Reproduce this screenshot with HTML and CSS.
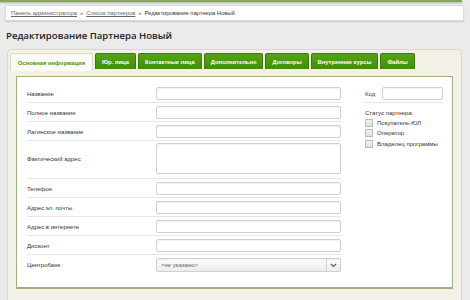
FILE: index.html
```html
<!DOCTYPE html>
<html lang="ru">
<head>
<meta charset="utf-8">
<link rel="stylesheet" href="styles.css">
</head>
<body>
<div class="topbar"></div>
<div class="crumbs">
  <a href="#">Панель администратора</a><span class="sep">»</span><a href="#">Список партнеров</a><span class="sep">»</span><span class="cur">Редактирование партнера Новый</span>
</div>
<h1 class="title">Редактирование Партнера Новый</h1>
<div class="panel">
  <div class="tabs">
    <div class="tab active">Основная информация</div>
    <div class="tab">Юр. лица</div>
    <div class="tab">Контактные лица</div>
    <div class="tab">Дополнительно</div>
    <div class="tab">Договоры</div>
    <div class="tab">Внутренние курсы</div>
    <div class="tab">Файлы</div>
  </div>
  <div class="box">
    <div class="main">
      <div class="row"><span class="lbl">Название</span><span class="inp"></span></div>
      <div class="row"><span class="lbl">Полное название</span><span class="inp"></span></div>
      <div class="row"><span class="lbl">Латинское название</span><span class="inp"></span></div>
      <div class="row tall"><span class="lbl">Фактический адрес</span><span class="inp area"></span></div>
      <div class="row"><span class="lbl">Телефон</span><span class="inp"></span></div>
      <div class="row"><span class="lbl">Адрес эл. почты</span><span class="inp"></span></div>
      <div class="row"><span class="lbl">Адрес в интернете</span><span class="inp"></span></div>
      <div class="row"><span class="lbl">Дисконт</span><span class="inp"></span></div>
      <div class="row last"><span class="lbl">Центробанк</span><span class="inp select"><span class="val">&lt;не указано&gt;</span><span class="arrow"><svg width="7" height="5" viewBox="0 0 7 5"><path d="M1 1 L3.5 3.5 L6 1" fill="none" stroke="#555" stroke-width="1.1"/></svg></span></span></div>
    </div>
    <div class="side">
      <div class="coderow"><span class="lbl">Код</span><span class="inp code"></span></div>
      <div class="status">Статус партнера:</div>
      <div class="chk"><span class="box2"></span>Покупатель-ЮЛ</div>
      <div class="chk"><span class="box2"></span>Оператор</div>
      <div class="chk"><span class="box2"></span>Владелец программы</div>
    </div>
  </div>
</div>
</body>
</html>
```
FILE: styles.css
```css
html, body { margin: 0; padding: 0; }
body {
  width: 470px; height: 300px; overflow: hidden;
  background: #ebebeb;
  font-family: "DejaVu Sans", Verdana, sans-serif;
  color: #333;
}
.topbar {
  width: 462px; height: 2px;
  background: #86a94a;
  box-shadow: 0 1px 2px rgba(0,0,0,0.25);
}
.crumbs {
  margin: 3px 0 0 5px;
  height: 14px;
  width: 452px;
  background: #fff;
  border: 1px solid #dcdcdc;
  box-shadow: 0 1px 1px rgba(0,0,0,0.12);
  display: flex; align-items: center;
  padding-left: 5px; box-sizing: content-box;
  font-size: 5.8px;
  font-family: "Liberation Sans", Arial, sans-serif;
}
.crumbs a { color: #666; text-decoration: underline; }
.crumbs .sep { color: #666; margin: 0 3px; }
.crumbs .cur { color: #333; }
.title {
  margin: 8px 0 0 6px;
  font-family: "Open Sans", sans-serif;
  font-weight: 600;
  font-size: 9.6px;
  line-height: 14px;
  color: #222;
  height: 14px;
}
.panel {
  margin: 6px 0 0 7px;
  width: 455px; height: 260px;
  background: #f3f1e5;
  border: 1px solid #dcd9c6;
  border-radius: 4px 4px 0 0;
  box-sizing: border-box;
}
.tabs {
  display: flex; gap: 2px;
  padding: 3px 0 0 2px;
}
.tab {
  height: 16px; box-sizing: border-box;
  padding: 0 6px;
  display: flex; align-items: center;
  background: linear-gradient(#55a414, #438d08);
  border: 1px solid #3b7a08;
  border-bottom: none;
  border-radius: 2px 2px 0 0;
  color: #fff;
  font-family: "Liberation Sans", Arial, sans-serif;
  font-weight: bold;
  font-size: 5.8px;
}
.tab.active {
  background: #fbfbf5;
  border-color: #dcd9c6;
  color: #4a980c;
  padding: 0 7px;
  height: 18px;
}
.box {
  margin: 5px 0 0 8px;
  width: 437px; height: 213px;
  background: #fff;
  border: 1px solid #9db07e;
  border-bottom-width: 2px;
  box-sizing: border-box;
  display: flex;
  padding: 7px 0 0 10px;
  font-family: "Liberation Sans", Arial, sans-serif;
  font-size: 6px;
  color: #333;
}
.main { width: 314px; }
.row {
  display: flex; align-items: center;
  padding: 3px 0 2px;
  border-bottom: 1px solid #e6e6e6;
}
.row.last { border-bottom: none; }
.row.tall { padding: 2px 0 4px; }
.lbl { width: 129px; flex: none; }
.inp {
  display: block;
  width: 185px; height: 13px;
  box-sizing: border-box;
  border: 1px solid #cfcfcf;
  border-radius: 2px;
  background: #fff;
  box-shadow: inset 0 1px 1px rgba(0,0,0,0.05);
}
.inp.area { height: 31px; }
.inp.select {
  height: 14px;
  display: flex; align-items: center;
  background: linear-gradient(#fdfdfd, #ececec);
  color: #666;
}
.select .val { flex: 1; padding-left: 4px; }
.select .arrow {
  width: 13px; height: 100%;
  border-left: 1px solid #cfcfcf;
  display: flex; align-items: center; justify-content: center;
}
.side {
  margin-left: 24px;
  width: 78px;
}
.coderow {
  display: flex; align-items: center;
  padding: 3px 0 2px;
  border-bottom: 1px solid #e6e6e6;
}
.coderow .lbl { width: 17px; }
.inp.code { width: 61px; }
.status { margin-top: 6px; line-height: 8px; }
.chk {
  display: flex; align-items: center;
  height: 10px;
  margin-top: 0.5px;
}
.box2 {
  width: 6px; height: 6px;
  border: 1px solid #b9b9b9;
  background: linear-gradient(#f2f2f2, #dedede);
  margin-right: 4px;
  flex: none;
}
```
